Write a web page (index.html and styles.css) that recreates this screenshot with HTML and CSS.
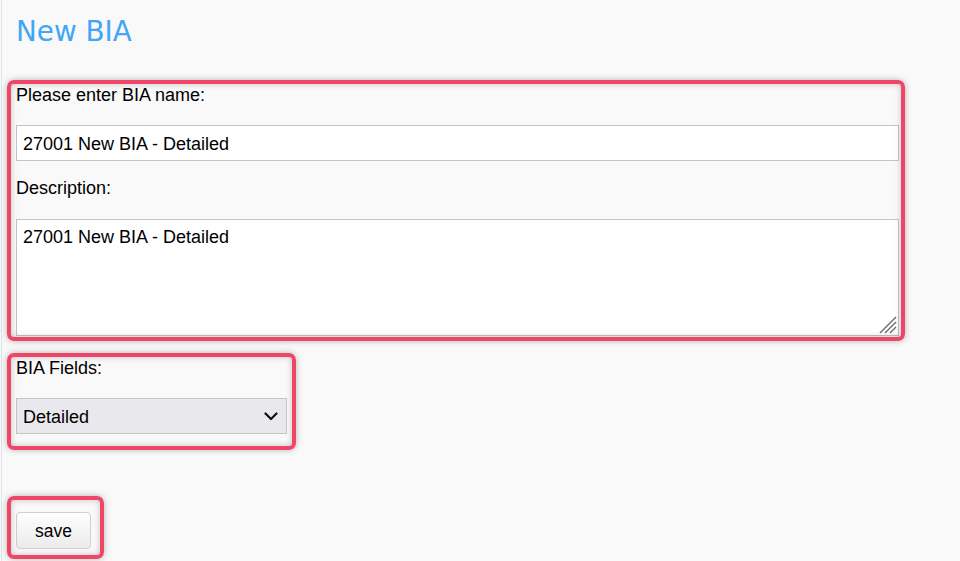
FILE: index.html
```html
<!DOCTYPE html>
<html lang="en">
<head>
<meta charset="utf-8">
<title>New BIA</title>
<link rel="stylesheet" href="styles.css">
</head>
<body>
<div class="page">
  <h1 class="title">New BIA</h1>

  <div class="group g1">
    <label class="label" for="bia-name">Please enter BIA name:</label>
    <input class="field input" id="bia-name" type="text" value="27001 New BIA - Detailed">
    <label class="label label-desc" for="bia-desc">Description:</label>
    <div class="textarea-wrap">
      <textarea class="field textarea" id="bia-desc">27001 New BIA - Detailed</textarea>
      <svg class="grip" width="18" height="18" viewBox="0 0 18 18" aria-hidden="true">
        <path d="M1 17 L17 1 M6 17 L17 6 M11 17 L17 11" fill="none" stroke="#6a6a6a" stroke-width="1.4"/>
      </svg>
    </div>
  </div>

  <div class="group g2">
    <label class="label" for="bia-fields">BIA Fields:</label>
    <div class="select-wrap">
      <select class="field select" id="bia-fields">
        <option>Detailed</option>
        <option>Simple</option>
      </select>
      <svg class="chevron" width="14" height="9" viewBox="0 0 14 9" aria-hidden="true">
        <path d="M1.5 1.5 L7 7 L12.5 1.5" fill="none" stroke="#111" stroke-width="2.2" stroke-linecap="round" stroke-linejoin="round"/>
      </svg>
    </div>
  </div>

  <div class="group g3">
    <button class="btn" type="button">save</button>
  </div>
</div>
</body>
</html>
```

FILE: styles.css
```css
html, body {
  margin: 0;
  padding: 0;
  background: #f9f9f9;
}

body {
  font-family: "Liberation Sans", Arial, sans-serif;
  color: #000;
  min-height: 561px;
}

.page {
  margin-left: 1px;
  border-left: 1px solid #dbe4ef;
  padding: 16px 0 0 14px;
  min-height: 545px;
}

.title {
  margin: 0;
  font-family: "DejaVu Sans", Verdana, sans-serif;
  font-weight: normal;
  font-size: 27.8px;
  line-height: 32px;
  color: #42a5f5;
}

.group {
  position: relative;
}

.group::after {
  content: "";
  position: absolute;
  border: 4px solid #ef4567;
  border-radius: 7px;
  box-shadow: 0 0 6px rgba(0, 0, 0, 0.28), inset 0 0 6px rgba(0, 0, 0, 0.22);
  pointer-events: none;
}

.g1 {
  width: 883px;
  margin-top: 37px;
}
.g1::after {
  top: -5px;
  bottom: -5px;
  left: -9px;
  right: -6px;
}

.g2 {
  width: 271px;
  margin-top: 22px;
}
.g2::after {
  top: -5px;
  bottom: -16px;
  left: -9px;
  right: -9px;
}

.g3 {
  width: 75px;
  margin-top: 78px;
}
.g3::after {
  top: -16px;
  bottom: -10px;
  left: -9px;
  right: -13px;
}

.label {
  display: block;
  font-size: 18px;
  line-height: 20px;
}

.label-desc {
  margin-top: 17px;
}

.field {
  display: block;
  box-sizing: border-box;
  width: 100%;
  margin: 0;
  font-family: "Liberation Sans", Arial, sans-serif;
  font-size: 18px;
  color: #000;
  border: 1px solid #c4c4c4;
  border-radius: 0;
  outline: none;
}

.input {
  margin-top: 20px;
  height: 36px;
  padding: 2px 6px 0;
  background: #fff;
}

.textarea-wrap {
  position: relative;
  margin-top: 21px;
}

.textarea {
  height: 117px;
  padding: 7px 6px 6px;
  line-height: 20px;
  background: #fff;
  resize: none;
}

.grip {
  position: absolute;
  right: 2px;
  bottom: 2px;
  pointer-events: none;
}

.select-wrap {
  position: relative;
  margin-top: 20px;
}

.select {
  -webkit-appearance: none;
  appearance: none;
  height: 36px;
  padding: 1px 6px 0;
  background: #e9e9ed;
  border-color: #c6c6c6;
}

.chevron {
  position: absolute;
  right: 9px;
  top: 14px;
  pointer-events: none;
}

.btn {
  display: block;
  box-sizing: border-box;
  width: 75px;
  height: 37px;
  margin: 0;
  padding: 1px 0 0;
  font-family: "Liberation Sans", Arial, sans-serif;
  font-size: 17.5px;
  color: #000;
  background: linear-gradient(#fdfdfd, #ececec);
  border: 1px solid #cfcfcf;
  border-radius: 4px;
}
```
